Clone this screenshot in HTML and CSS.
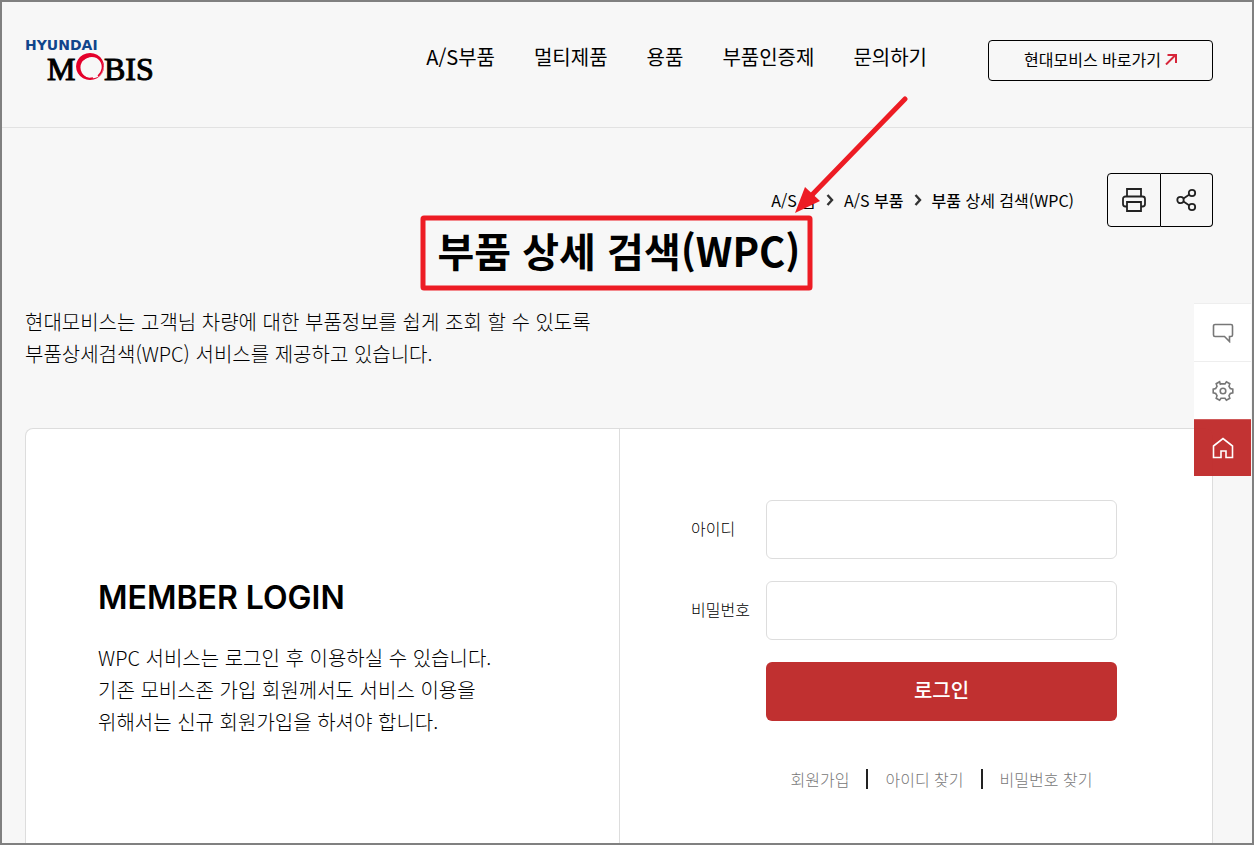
FILE: index.html
```html
<!DOCTYPE html>
<html lang="ko">
<head>
<meta charset="utf-8">
<meta name="viewport" content="width=device-width, initial-scale=1">
<title>부품 상세 검색(WPC)</title>
<link rel="stylesheet" href="styles.css">
</head>
<body>
<header class="header">
  <a class="logo" href="#" aria-label="HYUNDAI MOBIS">
    <svg width="132" height="44" viewBox="0 0 132 44">
      <text class="logo-top" x="0" y="12">HYUNDAI</text>
      <text class="logo-main" x="22" y="42">M</text>
      <text class="logo-main" x="79" y="42">BIS</text>
      <path fill="#e4002b" fill-rule="evenodd" d="M65 15a14 13.500 0 1 0 0.100 0zM67 18.500a11.500 11 0 1 1-0.100 0z"/>
      <path fill="none" stroke="#e4002b" stroke-width="1.500" d="M58 22c5-5 13-5 17 0 4 5 3 12-2 16M56 36c3 4 8 5 12 4"/>
    </svg>
  </a>
  <nav class="nav">
    <a href="#">A/S부품</a>
    <a href="#">멀티제품</a>
    <a href="#">용품</a>
    <a href="#">부품인증제</a>
    <a href="#">문의하기</a>
  </nav>
  <a class="shortcut" href="#">현대모비스 바로가기
    <svg width="12" height="12" viewBox="0 0 12 12" fill="none" stroke="#d7263a" stroke-width="2"><path d="M1 11.500 10.500 2M2.500 2h8.500v8"/></svg>
  </a>
</header>

<main class="main">
  <div class="topbar">
    <nav class="crumbs" aria-label="현재 위치">
      <a href="#">A/S 홈</a>
      <svg width="8" height="12" viewBox="0 0 8 12"><path d="M1.500 1l4.500 5-4.500 5"/></svg>
      <a href="#">A/S <b>부품</b></a>
      <svg width="8" height="12" viewBox="0 0 8 12"><path d="M1.500 1l4.500 5-4.500 5"/></svg>
      <a href="#"><b>부품</b> 상세 검색(WPC)</a>
    </nav>
    <div class="tools">
      <button type="button" aria-label="인쇄">
        <svg width="24" height="24" viewBox="0 0 24 24"><path d="M5 8.500V1h14v7.500M5 18.500H3.500a2.500 2.500 0 0 1-2.500-2.500v-5a2.500 2.500 0 0 1 2.500-2.500h17a2.500 2.500 0 0 1 2.500 2.500v5a2.500 2.500 0 0 1-2.500 2.500H19M5 14h14v9H5z"/></svg>
      </button>
      <button type="button" aria-label="공유">
        <svg width="22" height="24" viewBox="0 0 22 24"><circle cx="4.500" cy="12" r="3.200"/><circle cx="16" cy="5" r="3.200"/><circle cx="16" cy="19" r="3.200"/><path d="M7.500 10.500 13 6.700M7.500 13.500l5.500 3.800"/></svg>
      </button>
    </div>
  </div>

  <h1 class="title"><span class="marked">부품 상세 검색(WPC)
    <svg class="marker" width="488" height="198" viewBox="0 0 488 198" aria-hidden="true">
      <rect x="3" y="122" width="387" height="70" rx="1" fill="none" stroke="#ed1c24" stroke-width="5"/>
      <path d="M485 3 389 102" stroke="#ed1c24" stroke-width="5" stroke-linecap="round"/>
      <path d="M375 117 385 91l15 14z" fill="#ed1c24"/>
    </svg></span></h1>

  <p class="intro">현대모비스는 고객님 차량에 대한 부품정보를 쉽게 조회 할 수 있도록<br>부품상세검색(WPC) 서비스를 제공하고 있습니다.</p>

  <section class="card">
    <div class="about">
      <h2>MEMBER LOGIN</h2>
      <p>WPC 서비스는 로그인 후 이용하실 수 있습니다.<br>기존 모비스존 가입 회원께서도 서비스 이용을<br>위해서는 신규 회원가입을 하셔야 합니다.</p>
    </div>
    <form class="login">
      <label for="uid">아이디</label>
      <input id="uid" type="text">
      <label for="upw">비밀번호</label>
      <input id="upw" type="password">
      <button class="submit" type="button">로그인</button>
      <div class="links">
        <a href="#">회원가입</a>
        <a href="#">아이디 찾기</a>
        <a href="#">비밀번호 찾기</a>
      </div>
    </form>
  </section>
</main>

<aside class="quick">
  <a href="#" aria-label="상담">
    <svg width="22" height="20" viewBox="0 0 22 20"><path d="M3 1.500h16a1.500 1.500 0 0 1 1.500 1.500v9a1.500 1.500 0 0 1-1.500 1.500h-1.500V18.500L12.500 13.500H3A1.500 1.500 0 0 1 1.500 12V3A1.500 1.500 0 0 1 3 1.500z"/></svg>
  </a>
  <a href="#" aria-label="설정">
    <svg width="22" height="22" viewBox="0 0 22 22"><circle cx="11" cy="11" r="2.800"/><path d="M8.300 4.200 7.600 1.800 4.200 3.700 5 6.300 3.700 8.500 1.200 9.200v3.600l2.500.7L5 15.700l-.8 2.600 3.400 1.900 1.400-2h4l1.400 2 3.400-1.900-.8-2.600 1.300-2.200 2.500-.7V9.200l-2.500-.7L17 6.300l.8-2.600-3.400-1.900-1.400 2.100H9z"/></svg>
  </a>
  <a class="home" href="#" aria-label="홈">
    <svg width="22" height="22" viewBox="0 0 22 22"><path d="M1.500 9 11 1.500 20.500 9v11.500H14V14H9v6.500H1.500z"/></svg>
  </a>
</aside>
</body>
</html>
```
FILE: styles.css
```css
* { box-sizing: border-box; }

body {
  position: relative;
  display: flex;
  flex-direction: column;
  min-height: 100vh;
  margin: 0;
  border: 2px solid #808080;
  background: #f7f7f7;
  color: #000;
  font-family: "Noto Sans CJK KR", "Noto Sans", sans-serif;
  font-size: 16px;
}

a { color: inherit; text-decoration: none; }
h1, h2, p { margin: 0; }
svg { display: block; }

.header {
  display: flex;
  align-items: center;
  padding: 36px 39px 45px 23px;
  border-bottom: 1px solid #e2e2e2;
}
.logo svg { overflow: visible; }
.logo-top {
  font: bold 14px "DejaVu Sans", sans-serif;
  fill: #10458c;
}
.logo-main {
  font: 32px "Liberation Serif", serif;
  fill: #000;
  stroke: #000;
  stroke-width: 1px;
}
.nav {
  display: flex;
  gap: 39px;
  margin: 0 61px 0 auto;
  padding-bottom: 6px;
  font-size: 20px;
  line-height: 30px;
}
.shortcut {
  display: flex;
  align-items: center;
  justify-content: center;
  gap: 4px;
  width: 225px;
  height: 41px;
  padding-bottom: 3px;
  border: 1px solid #000;
  border-radius: 4px;
}

.main {
  display: flex;
  flex: 1;
  flex-direction: column;
  padding: 45px 39px 0 23px;
}
.topbar {
  display: flex;
  align-items: center;
  justify-content: flex-end;
  gap: 33px;
}
.crumbs {
  display: flex;
  align-items: center;
  gap: 10px;
  font-size: 16px;
  line-height: 24px;
}
.crumbs b { font-weight: 500; }
.crumbs svg { fill: none; stroke: #333; stroke-width: 2.4; }
.tools { display: flex; }
.tools button {
  display: flex;
  align-items: center;
  justify-content: center;
  width: 52px;
  height: 54px;
  padding: 0;
  border: 1px solid #000;
  background: none;
}
.tools button:first-child { width: 54px; border-radius: 4px 0 0 4px; }
.tools button:last-child { border-left: 0; border-radius: 0 4px 4px 0; }
.tools svg { fill: none; stroke: #222; stroke-width: 1.8; }

.title {
  font-size: 40px;
  font-weight: 700;
  line-height: 46px;
  text-align: center;
}
.marked { position: relative; display: inline-block; }
.marker {
  position: absolute;
  left: -18px;
  bottom: -21px;
}

.intro {
  margin: 33px 0 58px;
  font-size: 20px;
  font-weight: 300;
  line-height: 32px;
}

.card {
  display: grid;
  flex: 1;
  grid-template-columns: calc(50% + 1px) 1fr;
  border: 1px solid #ddd;
  border-bottom: 0;
  border-radius: 8px 8px 0 0;
  background: #fff;
}
.about {
  padding: 149px 24px 24px 72px;
  border-right: 1px solid #ddd;
}
.about h2 {
  margin-bottom: 24px;
  font-family: Inter, sans-serif;
  font-size: 32px;
  font-weight: 600;
  line-height: 40px;
}
.about p { font-size: 20px; font-weight: 300; line-height: 32px; }

.login {
  display: grid;
  grid-template-columns: 75px 1fr;
  align-content: start;
  align-items: center;
  row-gap: 22px;
  padding: 71px 95px 24px 71px;
}
.login label { padding-bottom: 4px; font-weight: 300; line-height: 24px; }
.login input {
  width: 100%;
  height: 59px;
  padding: 0 16px;
  border: 1px solid #ddd;
  border-radius: 6px;
  background: #fff;
  font: inherit;
}
.submit {
  grid-column: 2;
  height: 59px;
  padding: 0 0 4px;
  border: 0;
  border-radius: 6px;
  background: #c03030;
  color: #fff;
  font: 500 20px "Noto Sans CJK KR", sans-serif;
}
.links {
  display: flex;
  grid-column: 2;
  justify-content: center;
  margin-top: 26px;
  color: #777;
  font-weight: 300;
  line-height: 20px;
}
.links a + a {
  margin-left: 17px;
  padding-left: 17px;
  border-left: 2px solid #222;
}

.quick {
  position: absolute;
  top: 301px;
  right: 1px;
  width: 57px;
}
.quick a {
  display: flex;
  align-items: center;
  justify-content: center;
  height: 58px;
  border-top: 1px solid #eee;
  background: #fff;
}
.quick a.home { height: 57px; background: rgba(192, 44, 44, 0.97); border-color: #cf5a5a; }
.quick svg { fill: none; stroke: #777; stroke-width: 1.6; }
.quick .home svg { stroke: #fff; }
```
